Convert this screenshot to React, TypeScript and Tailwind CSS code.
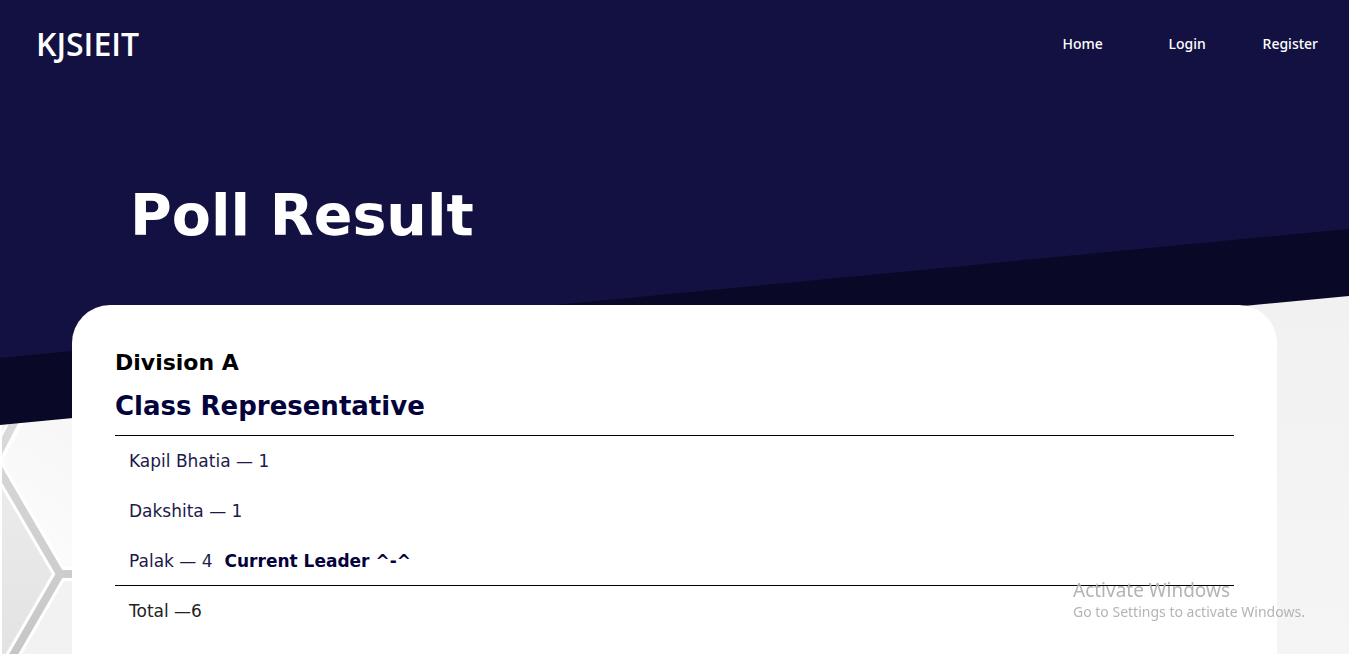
const links = [
  { label: "Home", href: "#home" },
  { label: "Login", href: "#login" },
  { label: "Register", href: "#register" },
];

const candidates = [
  { name: "Kapil Bhatia", votes: 1, leader: false },
  { name: "Dakshita", votes: 1, leader: false },
  { name: "Palak", votes: 4, leader: true },
];

function Backdrop() {
  return (
    <div className="absolute inset-0 -z-10 overflow-hidden bg-linear-to-b from-[#eeeeee] to-[#f5f5f5]" aria-hidden="true">
      <svg className="absolute left-0 top-0" width="240" height="654" viewBox="0 0 240 654">
        <defs>
          <linearGradient id="cell" x1="0" y1="1" x2="1" y2="0">
            <stop offset="0" stopColor="#fdfdfd" />
            <stop offset="1" stopColor="#f3f3f3" />
          </linearGradient>
          <linearGradient id="shade" x1="0" y1="0" x2="0" y2="1">
            <stop offset="0" stopColor="#ececec" />
            <stop offset="1" stopColor="#e3e3e3" />
          </linearGradient>
          <linearGradient id="line" gradientUnits="userSpaceOnUse" x1="0" y1="420" x2="0" y2="654">
            <stop offset="0" stopColor="#dadada" />
            <stop offset="1" stopColor="#c6c6c8" />
          </linearGradient>
        </defs>
        <path d="M20 415H240V574H60L-4 465Z" fill="url(#cell)" />
        <path d="M60 574H240V654H12Z" fill="#f2f2f2" />
        <path d="M-4 465L60 574L12 656H-4Z" fill="url(#shade)" />
        <g fill="none">
          <path d="M20 415L-6 461L60 574L8 664M60 574H240" stroke="#fff" strokeWidth="14" />
          <path d="M18 415L-6 461L60 574L8 664M60 574H240" stroke="url(#line)" strokeWidth="8" />
        </g>
        <path d="M0 415H2V654H0Z" fill="#fff" />
      </svg>
      <svg className="absolute left-0 top-0 h-[426px] w-full" viewBox="0 0 1349 426" preserveAspectRatio="none">
        <path d="M0 0H1349V296L0 425Z" fill="#090826" />
        <path d="M0 0H1349V229L0 358Z" fill="#131141" />
      </svg>
    </div>
  );
}

export default function App() {
  return (
    <div className="relative isolate flex min-h-screen flex-col font-['DejaVu_Sans',Verdana,sans-serif]">
      <Backdrop />
      <header className="flex h-22 items-center justify-between pr-[31px] pl-9 text-white">
        <a href="#home" className="font-['Open_Sans',sans-serif] text-[32px] leading-none font-semibold">
          KJSIEIT
        </a>
        <nav aria-label="Main" className="font-['Noto_Sans',sans-serif] text-sm font-medium">
          <ul className="flex">
            {links.map((link) => (
              <li key={link.label} className="ml-[58px] min-w-12 first:ml-0 last:ml-[46px]">
                <a href={link.href}>{link.label}</a>
              </li>
            ))}
          </ul>
        </nav>
      </header>

      <main className="flex flex-1 flex-col px-18">
        <h1 className="mt-[87px] mb-[50px] pl-[58px] text-[57px] leading-[80px] font-bold text-white">Poll Result</h1>
        <section className="flex-1 rounded-t-[38px] bg-white px-[43px] pt-10 pb-5">
          <h2 className="text-[22px] leading-9 font-bold text-black">Division A</h2>
          <h3 className="mt-1.5 pb-2.5 text-[26px] leading-[38px] font-bold text-[#04023a]">Class Representative</h3>
          <ul className="border-y border-black">
            {candidates.map((candidate) => (
              <li key={candidate.name} className="flex h-[50px] items-center gap-3 px-3.5 pt-0.5 text-[17px] text-[#1c1a48] last:h-[49px]">
                <span>
                  {candidate.name} — {candidate.votes}
                </span>
                {candidate.leader && <strong className="text-[#04023a]">Current Leader ^-^</strong>}
              </li>
            ))}
          </ul>
          <p className="flex h-[50px] items-center px-3.5 pt-0.5 text-[17px] text-[#222222]">Total —6</p>
        </section>
      </main>

      <aside className="pointer-events-none fixed right-10 bottom-8 w-[236px] font-['Noto_Sans',sans-serif] text-[#b4b4b4]">
        <p className="text-[19px] leading-6">Activate Windows</p>
        <p className="text-sm leading-5">Go to Settings to activate Windows.</p>
      </aside>
    </div>
  );
}
